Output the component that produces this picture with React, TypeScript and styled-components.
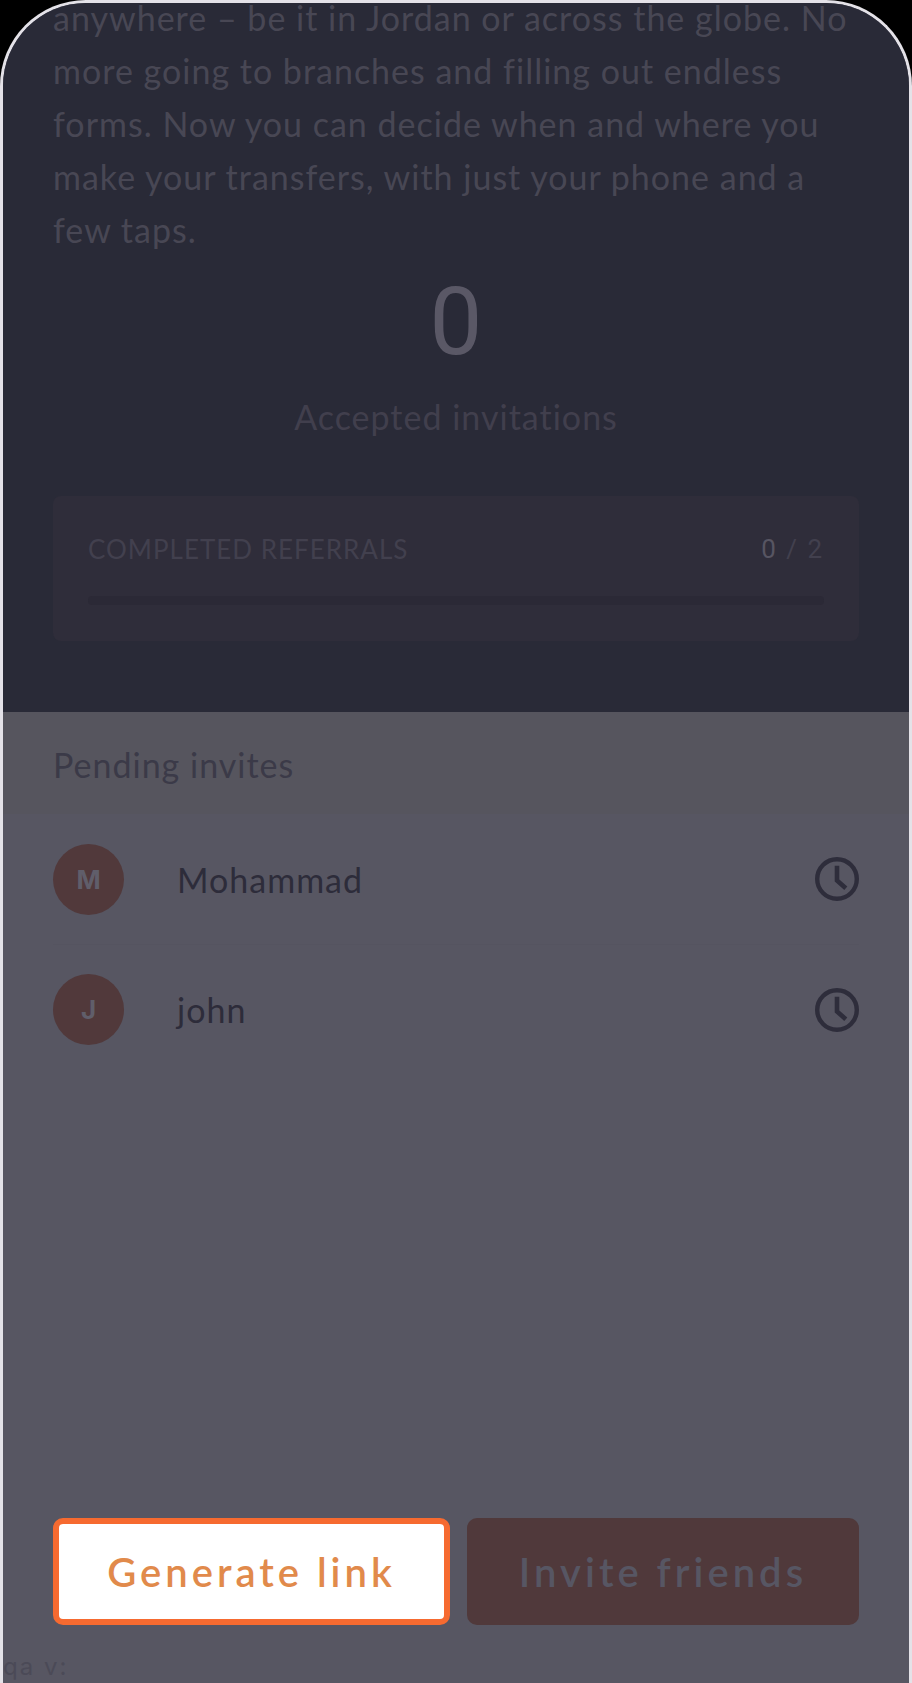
import React from "react";
import styled, { createGlobalStyle } from "styled-components";

const GlobalStyle = createGlobalStyle`
  * { box-sizing: border-box; }
  body { margin: 0; background: #000; font-family: Lato, "Open Sans", sans-serif; }
  h2, p, ul { margin: 0; padding: 0; font-weight: 400; }
  ul { list-style: none; }
`;

const Screen = styled.main`
  min-height: 100vh;
  display: flex;
  flex-direction: column;
  overflow: hidden;
  border: 3px solid #e4e2e8;
  border-bottom: 0;
  border-radius: 86px 86px 0 0;
  background: #575662;
`;

const Summary = styled.section`
  padding: 0 50px 71px;
  background: #292a37;
`;

const Intro = styled.p`
  margin-top: -12px;
  font-size: 34px;
  line-height: 53px;
  letter-spacing: 1px;
  white-space: nowrap;
  color: #484754;
`;

const Count = styled.p`
  margin-top: 11px;
  font-family: Roboto, sans-serif;
  font-size: 94px;
  line-height: 110px;
  text-align: center;
  color: #5a5866;
`;

const CountLabel = styled.p`
  margin-top: 13px;
  font-size: 34px;
  line-height: 53px;
  letter-spacing: 1px;
  text-align: center;
  color: #413f4d;
`;

const Card = styled.div`
  margin-top: 53px;
  padding: 36px 35px;
  border-radius: 8px;
  background: #2f2d3a;
`;

const CardHead = styled.div`
  display: flex;
  justify-content: space-between;
  font-size: 26px;
  line-height: 34px;
  letter-spacing: 1px;
  color: #42404e;
`;

const Ratio = styled.span`
  font-family: Roboto, sans-serif;
  letter-spacing: 2px;
`;

const Done = styled.span`
  color: #575562;
`;

const Track = styled.div`
  height: 9px;
  margin-top: 30px;
  border-radius: 4px;
  background: #2b2936;
`;

const SectionTitle = styled.h2`
  padding: 26px 50px 23px;
  font-size: 34px;
  line-height: 53px;
  letter-spacing: 1px;
  color: #3b3a48;
  background: #56555e;
`;

const Invites = styled.ul`
  flex: 1;
  padding: 0 50px;
`;

const Invite = styled.li`
  display: flex;
  align-items: center;
  height: 130px;
  font-size: 34px;
  letter-spacing: 1px;
  color: #2d2c3a;

  & + & { border-top: 1px solid #555460; }
`;

const Avatar = styled.span`
  display: flex;
  align-items: center;
  justify-content: center;
  width: 71px;
  height: 71px;
  margin-right: 53px;
  border-radius: 50%;
  font-family: Inter, sans-serif;
  font-size: 26px;
  font-weight: 700;
  letter-spacing: 0;
  color: #605e6a;
  background: #51393b;
`;

const ClockIcon = styled.svg`
  width: 44px;
  height: 44px;
  margin-left: auto;
`;

const Actions = styled.div`
  display: grid;
  grid-template-columns: 397fr 392fr;
  gap: 17px;
  padding: 0 50px;
`;

const Action = styled.button<{ $highlighted?: boolean }>`
  height: 107px;
  padding: 0;
  border: ${(p) => (p.$highlighted ? "6px solid #f66a30" : "0")};
  border-radius: 10px;
  font-family: Lato, sans-serif;
  font-size: 40px;
  font-weight: 600;
  letter-spacing: 4px;
  color: ${(p) => (p.$highlighted ? "#e18a4b" : "#575663")};
  background: ${(p) => (p.$highlighted ? "#fff" : "#50393b")};
`;

const Version = styled.footer`
  height: 58px;
  padding-top: 26px;
  font-family: Inter, sans-serif;
  font-size: 24px;
  line-height: 32px;
  letter-spacing: 2px;
  color: #4b4a57;
`;

function Clock() {
  return (
    <ClockIcon viewBox="0 0 44 44" fill="none" stroke="#2e2d3b" role="img" aria-label="Pending">
      <circle cx="22" cy="22" r="19.8" strokeWidth="4.4" />
      <path d="M22 8.8V23.4L30.8 31.2" strokeWidth="4.6" />
    </ClockIcon>
  );
}

const pending = ["Mohammad", "john"];

export default function App() {
  return (
    <>
      <GlobalStyle />
      <Screen>
        <Summary>
          <Intro>
            anywhere – be it in Jordan or across the globe. No
            <br />
            more going to branches and filling out endless
            <br />
            forms. Now you can decide when and where you
            <br />
            make your transfers, with just your phone and a
            <br />
            few taps.
          </Intro>
          <Count>0</Count>
          <CountLabel>Accepted invitations</CountLabel>
          <Card>
            <CardHead>
              <span>COMPLETED REFERRALS</span>
              <Ratio>
                <Done>0</Done> / 2
              </Ratio>
            </CardHead>
            <Track role="progressbar" aria-label="Completed referrals" aria-valuenow={0} aria-valuemin={0} aria-valuemax={2} />
          </Card>
        </Summary>
        <SectionTitle>Pending invites</SectionTitle>
        <Invites>
          {pending.map((name) => (
            <Invite key={name}>
              <Avatar>{name[0].toUpperCase()}</Avatar>
              {name}
              <Clock />
            </Invite>
          ))}
        </Invites>
        <Actions>
          <Action type="button" $highlighted>Generate link</Action>
          <Action type="button">Invite friends</Action>
        </Actions>
        <Version>qa v:</Version>
      </Screen>
    </>
  );
}
